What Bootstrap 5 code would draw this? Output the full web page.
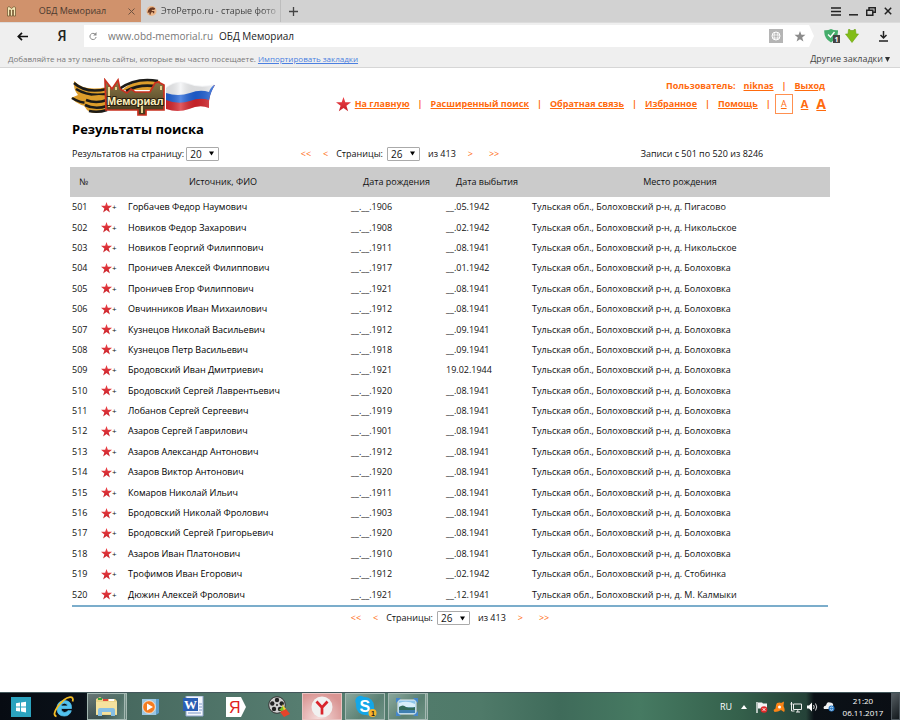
<!DOCTYPE html>
<html lang="ru">
<head>
<meta charset="utf-8">
<meta name="viewport" content="width=device-width, initial-scale=1">
<title>ОБД Мемориал</title>
<link rel="stylesheet" href="https://cdn.jsdelivr.net/npm/bootstrap@5.3.0/dist/css/bootstrap.min.css">
<style>
  body { font-family: "Open Sans", "Noto Sans", sans-serif; font-size: 9px; line-height: 12px; color: #111; background: #fff; }
  svg { display: block; flex: none; }
  button { border: 0; background: none; padding: 0; color: inherit; }
  .tabstrip { background: #d2d2d2; height: 23px; border-bottom: 1px solid #dcdcdc; color: #444; }
  .tab-on { background: #d0926c; width: 141px; padding: 0 6px; color: #4b3a30; }
  .tab-off { width: 140px; padding: 0 2px 0 5px; border-right: 1px solid #bdbdbd; }
  .fade-text { white-space: nowrap; -webkit-mask-image: linear-gradient(90deg, #000 88%, #0005); mask-image: linear-gradient(90deg, #000 88%, #0005); }
  .tools { background: #efefef; height: 26px; padding: 2px 12px 2px 0; color: #222; }
  .back-cell { width: 44px; }
  .ya-cell { width: 36px; font-size: 14px; line-height: 16px; font-family: "Roboto", sans-serif; font-weight: 500; }
  .address { background: #fff; height: 22px; padding: 0 8px 0 5px; gap: 11px; font-size: 10px; clip-path: polygon(0 0, calc(100% - 5px) 0, 100% 50%, calc(100% - 5px) 100%, 0 100%); }
  .address input { border: 0; outline: 0; background: none; padding: 0; width: 107px; color: #777; }
  .ext { padding-left: 10px; }
  .bookbar { background: #efefef; height: 19px; border-bottom: 1px solid #d6d6d6; padding: 2px 10px 0 8px; font-size: 8px; color: #777; }
  .bookbar a { color: #4b7fe0; margin-left: 2px; }
  .bookbar button { color: #444; font-size: 9px; gap: 2px; }
  .site { padding: 10px 70px 0; }
  .masthead { height: 42px; }
  .orange, .orange a { color: #ff6a0d; }
  .orange { font-weight: 700; }
  .user-line { gap: 8px; padding-right: 5px; margin-top: 2px; }
  .menu-line { gap: 8px; padding-right: 4px; height: 24px; }
  .letters { gap: 4px; }
  .size-on { border: 1px solid #ff9050; width: 18px; height: 20px; font-weight: 400; }
  .size-m { font-size: 11px; }
  .size-l { font-size: 14px; }
  .page-title { font-size: 13px; font-weight: 700; line-height: 18px; padding-left: 2px; color: #000; }
  .pager-row { height: 29px; display: grid; grid-template-columns: 156px 1fr 256px; padding-top: 2px; }
  .per-page { padding-left: 2px; gap: 2px; }
  .pick { appearance: none; -webkit-appearance: none; border: 1px solid #aaa; border-radius: 1px; height: 14px; width: 33px; padding: 0 0 0 3px; font-size: 10px; line-height: 12px; color: #111;
    background: #fff url("data:image/svg+xml,%3Csvg xmlns='http://www.w3.org/2000/svg' viewBox='0 0 6 5'%3E%3Cpath d='M0 0h6L3 5z'/%3E%3C/svg%3E") no-repeat right 4px center / 5px 5px; }
  .pages a { color: #ff6a0d; text-decoration: none; white-space: nowrap; }
  .pages a:first-child, .pages a:last-child { margin: 0 4px; }
  .results { table-layout: fixed; width: 100%; height: 438px; }
  .results th { background: #cbcbcb; height: 30px; font-weight: 400; text-align: center; padding: 0; }
  .results td { padding: 0 2px; white-space: nowrap; vertical-align: middle; }
  .results td:nth-child(2) { padding-left: 4px; }
  .results td:nth-child(3) a { color: #000; font-weight: 500; text-decoration: none; }
  .results button { font-size: 8px; line-height: 12px; }
  .c-num { width: 27px; } .c-star { width: 29px; } .c-name { width: 223px; } .c-born { width: 95px; } .c-out { width: 86px; }
  .rule { height: 2px; background: #7badcb; margin: 0 2px; }
  .taskbar { height: 28px; padding-left: 1px; border-top: 1px solid #43575b; color: #fff;
    background: linear-gradient(90deg, #070b12 0, #0a1119 84px, #47695f 124px, #567d70 300px, #4f7a69 480px, #3f6b5a 560px, #467a62 640px, #34604b 740px, #254238 806px, #0b1117 814px, #0a0e14 100%); }
  .tasks { gap: 3px; }
  .task { width: 40px; height: 27px; display: flex; align-items: center; justify-content: center; }
  .task-open { border: 1px solid #a4b8b2; background: linear-gradient(135deg, #b9ccc488, #6c8b8155 60%, #a0bbb055); }
  .task-stack { border-right: 3px double #a4b8b2; }
  .task-now { border: 1px solid #e9c4c2; background: radial-gradient(circle at 40% 100%, #f5dcdb, #d99593 80%); }
  .tray { gap: 5px; }
  .clock { font-size: 8px; line-height: 12px; width: 46px; }
  .peek { width: 9px; height: 27px; border: 1px solid #4d565c; background: linear-gradient(135deg, #555d62, #12181c); }
</style>
<script src="https://cdn.jsdelivr.net/npm/bootstrap@5.3.0/dist/js/bootstrap.bundle.min.js"></script>
</head>
<body class="d-flex flex-column min-vh-100">

<svg width="0" height="0" class="position-absolute" aria-hidden="true">
  <defs>
    <linearGradient id="red" x1="0" y1="0" x2="0" y2="1"><stop offset="0" stop-color="#ee444a"/><stop offset="1" stop-color="#c81f26"/></linearGradient>
    <linearGradient id="flag" x1="0" y1="0" x2="1" y2="0"><stop offset="0" stop-color="#000" stop-opacity=".1"/><stop offset=".3" stop-color="#fff" stop-opacity=".25"/><stop offset=".6" stop-color="#000" stop-opacity=".1"/><stop offset="1" stop-color="#fff" stop-opacity=".25"/></linearGradient>
    <linearGradient id="plate" x1="0" y1="0" x2="0" y2="1"><stop offset="0" stop-color="#8c7a48"/><stop offset="1" stop-color="#43361c"/></linearGradient>
    <symbol id="star" viewBox="0 0 20 20"><path d="M10 0l2.400 7H20l-6.100 4.600L16.200 19 10 14.600 3.800 19l2.300-7.400L0 7h7.600z" fill="url(#red)"/></symbol>
  </defs>
</svg>

<header>
  <div class="tabstrip d-flex">
    <div class="tab-on d-flex align-items-center">
      <svg width="11" height="12" viewBox="0 0 11 12"><path d="M1.500 11V2.500L3 1.500l2.500 2L8 1.500l1.500 1V11h-2V5h-1v6h-2V5h-1v6z" fill="#f6e9b8" stroke="#66502a" stroke-width=".7"/></svg>
      <span class="flex-fill text-center">ОБД Мемориал</span>
      <button type="button" aria-label="Закрыть вкладку"><svg width="7" height="7" viewBox="0 0 7 7"><path d="M.5.5l6 6M6.500.5l-6 6" stroke="#6d5241"/></svg></button>
    </div>
    <div class="tab-off d-flex align-items-center gap-1">
      <svg width="11" height="12" viewBox="0 0 12 12"><circle cx="6" cy="6" r="5.500" fill="#eeb98c"/><path d="M1.500 8l1-3 2-2.500 3-.5 2.500 1-1 2-2-.5-1 1.500h3v2.500H7.500V7l-2 .5-.5 2.500-1.500-.5.500-2z" fill="#6b3a22"/></svg>
      <span class="fade-text">ЭтоРетро.ru - старые фото</span>
    </div>
    <button type="button" class="px-2 d-flex align-items-center" aria-label="Новая вкладка"><svg width="9" height="9" viewBox="0 0 9 9"><path d="M4.500 0v9M0 4.500h9" stroke="#444" stroke-width="1.300"/></svg></button>
    <div class="ms-auto d-flex align-items-center gap-2 pe-2">
      <button type="button" aria-label="Меню"><svg width="10" height="9" viewBox="0 0 10 9"><path d="M0 1h10M0 4.500h10M0 8h10" stroke="#222" stroke-width="1.500"/></svg></button>
      <button type="button" aria-label="Свернуть"><svg width="9" height="9" viewBox="0 0 9 9"><path d="M0 7.800h9" stroke="#222" stroke-width="1.500"/></svg></button>
      <button type="button" aria-label="Окно"><svg width="10" height="9" viewBox="0 0 10 9"><path d="M3 3V.8h6.300v4.500H7M.7 3.300h6.100v4.900H.7z" fill="none" stroke="#222" stroke-width="1.500"/></svg></button>
      <button type="button" aria-label="Закрыть"><svg width="8" height="8" viewBox="0 0 8 8"><path d="M.8.800l6.400 6.400M7.200.800L.8 7.200" stroke="#222" stroke-width="1.500"/></svg></button>
    </div>
  </div>
  <div class="tools d-flex align-items-center">
    <button type="button" class="back-cell d-flex justify-content-center" aria-label="Назад"><svg width="11" height="9" viewBox="0 0 11 9"><path d="M11 4.500H1.500M5 .8L1.300 4.500 5 8.200" fill="none" stroke="#111" stroke-width="1.700"/></svg></button>
    <button type="button" class="ya-cell">Я</button>
    <div class="address d-flex align-items-center flex-fill ms-1">
      <svg width="8" height="9" viewBox="0 0 8 9"><path d="M6.300 2.300A3.100 3.100 0 1 0 7.100 5" fill="none" stroke="#888"/><path d="M7.500 0v3.400H4.200z" fill="#888"/></svg>
      <div class="d-flex align-items-center flex-fill"><input type="text" class="me-1" value="www.obd-memorial.ru" aria-label="Адрес"><span>ОБД Мемориал</span></div>
      <svg width="14" height="14" viewBox="0 0 14 14"><path d="M0 0h14v14H0z" fill="#b5b5b5"/><circle cx="7" cy="7" r="4" fill="none" stroke="#fff"/><path d="M3 6h8M3.500 9h7M6 3q-2 4 0 8M8 3q2 4 0 8" fill="none" stroke="#fff" stroke-width=".7"/></svg>
      <svg width="12" height="11" viewBox="0 0 20 20"><path d="M10 0l2.600 7H20l-6 4.800L16.200 19 10 14.800 3.800 19 6 11.800 0 7h7.400z" fill="#8c8c8c"/></svg>
    </div>
    <div class="ext d-flex align-items-center gap-1">
      <svg width="17" height="16" viewBox="0 0 17 16"><path d="M7 1q3 1.500 7 1.200Q14.500 10 7 14.500-.5 10 .3 2.200 4 2.500 7 1z" fill="#45ad6b"/><path d="M4 6.500l2.500 2.500L10.500 4" fill="none" stroke="#fff" stroke-width="1.300"/><path d="M9 7h7v8H9z" fill="#444"/><text x="10.500" y="14" font-size="7" font-weight="700" fill="#fff">1</text></svg>
      <svg width="14" height="14" viewBox="0 0 14 14"><path d="M3.500.5h1.500v1h4V.5h1.500L11 5h2.500L7 13.500.5 5H3z" fill="#82bd18" stroke="#6aa30d" stroke-width=".6"/></svg>
      <svg class="ms-3" width="9" height="11" viewBox="0 0 9 11"><path d="M4.500 0v6.500M1.500 4l3 3 3-3M0 10h9" fill="none" stroke="#222" stroke-width="1.500"/></svg>
    </div>
  </div>
  <div class="bookbar d-flex align-items-center">
    <span>Добавляйте на эту панель сайты, которые вы часто посещаете.</span>
    <a href="#">Импортировать закладки</a>
    <button type="button" class="ms-auto d-flex align-items-center">Другие закладки <svg width="5" height="5" viewBox="0 0 6 6"><path d="M0 0h6L3 6z" fill="#333"/></svg></button>
  </div>
</header>

<main class="site">
  <div class="masthead d-flex justify-content-between">
    <svg width="146" height="41" viewBox="0 0 146 41" role="img" aria-label="Мемориал">
      <path d="M96 10q10-8 22-4 12 5 27 1-7 9-6 23-9-4-20 1-11 4-23 0z" fill="#d9252c"/>
      <path d="M96 10q10-8 22-4 12 5 27 1-4 6-6 15-9-3-19 1-12 4-24-1z" fill="#1f62d9"/>
      <path d="M96 9q10-8 22-4 12 5 27 1-5 4-6 8-9-3-19 1-12 4-24 0z" fill="#f3f4f6"/>
      <path d="M96 10q10-8 22-4 12 5 27 1-7 9-6 23-9-4-20 1-11 4-23 0z" fill="url(#flag)"/>
      <path d="M4 3q10 11 33 6v17q-22 8-36-6l7-3Q3 11 4 3z" fill="#dd9d2a"/>
      <path d="M4 5q12 11 33 6M6 11q13 8 31 5M2 20q14 9 35 2" fill="none" stroke="#1c1b18" stroke-width="2.600"/>
      <path d="M16 20q10-5 21-2v14q-13 6-20 0-5-5-1-12z" fill="#dd9d2a"/>
      <path d="M16 22q10 4 21 0M15 27q10 5 22 1M19 33q9 2 18-1" fill="none" stroke="#1c1b18" stroke-width="2.600"/>
      <path d="M50 14Q66-2 90 3v9H50z" fill="#dd9d2a"/>
      <path d="M49 11Q66-1 88 3M56 13q16-8 32-4" fill="none" stroke="#1c1b18" stroke-width="2.600"/>
      <path d="M35 2l7 9 6-9 2 9 7 4 4-4 4 3h15l5-9 3-1 6 3v25H76v5h-8v-5H36z" fill="url(#plate)" stroke="#c9301f" stroke-width="1.700"/>
      <path d="M39 9v20M46 9v3M91 8v4M72 27v8" stroke="#e6d28f" stroke-width="2"/>
      <text x="37" y="27" font-family="Liberation Sans" font-weight="700" font-size="11" fill="#fdf1c0" stroke="#2b2110" stroke-width="2" paint-order="stroke">Мемориал</text>
    </svg>
    <nav class="orange">
      <div class="user-line d-flex justify-content-end"><span>Пользователь:</span><a href="#">niknas</a><span>|</span><a href="#">Выход</a></div>
      <div class="menu-line d-flex align-items-center">
        <div class="d-flex align-items-center gap-1"><svg width="15" height="15"><use href="#star"/></svg><a href="#">На главную</a></div>
        <span>|</span><a href="#">Расширенный поиск</a><span>|</span><a href="#">Обратная связь</a><span>|</span><a href="#">Избранное</a><span>|</span><a href="#">Помощь</a>
        <div class="letters d-flex align-items-center"><span>|</span><a href="#" class="size-on d-flex align-items-center justify-content-center">A</a><a href="#" class="size-m mx-1">A</a><a href="#" class="size-l">A</a></div>
      </div>
    </nav>
  </div>
  <h1 class="page-title m-0">Результаты поиска</h1>
  <div class="pager-row align-items-center">
    <div class="per-page d-flex align-items-center"><label for="per">Результатов на страницу:</label><select id="per" class="pick"><option>20</option></select></div>
    <nav class="pages d-flex align-items-center justify-content-center gap-1"><a href="#">&lt;&lt;</a><a href="#" class="mx-1">&lt;</a><label for="p1">Страницы:</label><select id="p1" class="pick"><option>26</option></select><span class="ms-1">из 413</span><a href="#" class="mx-2">&gt;</a><a href="#">&gt;&gt;</a></nav>
    <div class="text-center">Записи с 501 по 520 из 8246</div>
  </div>
  <table class="results">
    <colgroup><col class="c-num"><col class="c-star"><col class="c-name"><col class="c-born"><col class="c-out"><col></colgroup>
    <thead><tr><th scope="col">№</th><th scope="col" colspan="2">Источник, ФИО</th><th scope="col">Дата рождения</th><th scope="col">Дата выбытия</th><th scope="col">Место рождения</th></tr></thead>
    <tbody id="rows"></tbody>
  </table>
  <div class="rule"></div>
  <nav class="pages d-flex align-items-center justify-content-center gap-1 pt-1"><a href="#">&lt;&lt;</a><a href="#" class="mx-1">&lt;</a><label for="p2">Страницы:</label><select id="p2" class="pick"><option>26</option></select><span class="ms-1">из 413</span><a href="#" class="mx-2">&gt;</a><a href="#">&gt;&gt;</a></nav>
</main>

<footer class="taskbar d-flex align-items-center mt-auto">
  <div class="tasks d-flex">
    <button type="button" class="task" aria-label="Пуск"><svg width="20" height="20" viewBox="0 0 20 20"><path d="M0 0h20v20H0z" fill="#2ba3bf"/><path d="M5 6.200l4-.6v4H5zM10 5.500l5-.8v4.900h-5zM5 10.500h4v4l-4-.6zM10 10.500h5v4.900l-5-.8z" fill="#fff"/></svg></button>
    <button type="button" class="task" aria-label="Internet Explorer"><svg width="22" height="22" viewBox="0 0 22 22"><path d="M18.500 12.500H8q.3 4 3.600 4 2.400 0 3.200-1.800h3.500Q16.500 20 11.300 20 4 20 4 12.500 4 5 11.300 4.600q7.500 0 7.200 7.900zM8 10h6.700q-.4-2.800-3.300-2.800T8 10z" fill="#52c3ef" stroke="#52c3ef" stroke-width=".8"/><path d="M3.500 20.500Q-1 19 4.500 11 11 2 17 1.200q4-.2 2.600 4.300" fill="none" stroke="#f3bd25" stroke-width="1.800"/></svg></button>
    <button type="button" class="task task-open task-stack" aria-label="Проводник"><svg width="23" height="21" viewBox="0 0 23 21"><path d="M1 3l4-2 3 2h12l2 2v14H1z" fill="#edd58a"/><path d="M3 2h4v2H3z" fill="#3aa03c"/><path d="M8 3h5v2H8z" fill="#dd4939"/><path d="M14 3h5v2h-5z" fill="#fff"/><path d="M1 6h21v12H1z" fill="#f5e29e"/><path d="M3 20v-6q0-2 2-2h13q2 0 2 2v6h-4v-4H7v4z" fill="#86bfe4"/></svg></button>
    <button type="button" class="task" aria-label="Проигрыватель"><svg width="19" height="18" viewBox="0 0 19 18"><path d="M5 1h13v14l-3 2H5z" fill="#5f9fcb"/><path d="M1 1h14v16H1z" fill="#9cc7e2"/><circle cx="8" cy="9" r="6.300" fill="#f47c20" stroke="#fff" stroke-width=".7"/><path d="M6 5.500v7l6-3.500z" fill="#fff"/></svg></button>
    <button type="button" class="task" aria-label="Word"><svg width="21" height="21" viewBox="0 0 21 21"><path d="M3 0h17v20H3z" fill="#f3f6fc" stroke="#8fa6cd"/><path d="M0 2h15v13H0z" fill="#2b5fb5"/><text x="1" y="13" font-family="Liberation Serif" font-size="13" font-weight="700" fill="#fff">W</text><path d="M5 17h13M16 8h3M16 11h3M16 14h3" stroke="#7e98c8"/></svg></button>
    <button type="button" class="task" aria-label="Яндекс"><svg width="20" height="20" viewBox="0 0 20 20"><path d="M0 0h15l5 10-5 10H0z" fill="#fff"/><text x="3" y="16" font-family="Liberation Sans" font-size="16" fill="#e02020">Я</text></svg></button>
    <button type="button" class="task" aria-label="Видео"><svg width="22" height="21" viewBox="0 0 22 21"><circle cx="9" cy="9" r="8.300" fill="#cfcfcf" stroke="#333"/><g fill="#222"><circle cx="9" cy="4" r="2.200"/><circle cx="4.300" cy="7.500" r="2.200"/><circle cx="6" cy="13" r="2.200"/><circle cx="12" cy="13" r="2.200"/><circle cx="13.700" cy="7.500" r="2.200"/><circle cx="9" cy="9" r="1"/></g><path d="M11 14l4-4 2 6z" fill="#78c22a"/><path d="M14 8l4 5-2 2z" fill="#f4d335"/><path d="M12 16l6-3 4 5-6 3z" fill="#e6442b"/></svg></button>
    <button type="button" class="task task-now" aria-label="Яндекс.Браузер"><svg width="22" height="22" viewBox="0 0 22 22"><circle cx="11" cy="11" r="10.500" fill="#f1f1f1"/><path d="M5.500 5.500l5.500 6 5.500-6M11 11v7.500" fill="none" stroke="#d9252c" stroke-width="2.700"/></svg></button>
    <button type="button" class="task task-open" aria-label="Skype"><svg width="23" height="23" viewBox="0 0 23 23"><circle cx="11" cy="11" r="9" fill="#14a7e8"/><circle cx="6.500" cy="6" r="5.200" fill="#14a7e8"/><circle cx="15" cy="15" r="5.500" fill="#14a7e8"/><text x="5.500" y="16.500" font-family="Liberation Sans" font-size="16" font-weight="700" fill="#fff">S</text><circle cx="18.500" cy="18" r="4" fill="#f7b52a"/><text x="17" y="21" font-family="Liberation Sans" font-size="7" font-weight="700" fill="#222">1</text></svg></button>
    <button type="button" class="task task-open task-stack" aria-label="Изображения"><svg width="22" height="18" viewBox="0 0 22 18"><path d="M2 2h18v14H2z" fill="#8ec5ea" stroke="#e8eef2"/><path d="M3 5q8-3 16 1v3H3z" fill="#d9eefa"/><path d="M3 9q4-3 7 0 5 1 9 0v3H3z" fill="#356b5a"/><path d="M3 12h16v3H3z" fill="#3f7fb0"/><path d="M0 0h5L0 5zM22 0v5l-5-5zM0 18v-5l5 5zM22 18h-5l5-5z" fill="#4486cc"/></svg></button>
  </div>
  <div class="tray d-flex align-items-center ms-auto">
    <span>RU</span>
    <svg class="mx-1" width="6" height="4" viewBox="0 0 6 4"><path d="M0 4l3-4 3 4z" fill="#fff"/></svg>
    <svg width="12" height="12" viewBox="0 0 12 12"><path d="M1 1v11" stroke="#fff" stroke-width="1.300"/><path d="M2 1.500h4l1 1h4v5H2z" fill="#f3f3f3"/><circle cx="8" cy="8.500" r="3.300" fill="#e02a2a"/><path d="M6.700 7.200l2.600 2.600M9.300 7.200L6.700 9.800" stroke="#fff"/></svg>
    <svg width="12" height="12" viewBox="0 0 12 12"><path d="M4 2q3-1 4 0l3-1.500L10.500 5q2 4 .5 6l-3-2-3 1.500-3.500.5-1-2 2-1.500Q2.500 4 4 2z" fill="#fb8416"/><circle cx="6.500" cy="6" r="1.500" fill="#fff"/></svg>
    <svg width="12" height="12" viewBox="0 0 12 12"><path d="M3.500 3h8v5.500h-8zM6 11h4M7.800 8.500V11M1.500 1v4M.3 3h2.400M1.500 5v5h3" fill="none" stroke="#eee"/></svg>
    <svg width="11" height="10" viewBox="0 0 11 10"><path d="M0 3.500h2L5 .5v9l-3-3H0z" fill="#fff"/><path d="M6.500 3q1.500 2 0 4M8.500 1.500q2.500 3.500 0 7" fill="none" stroke="#ddd"/></svg>
    <svg width="12" height="11" viewBox="0 0 12 11"><path d="M1 8Q-.5 5 3 4.500 4 0 7 1.500 11 2 10 5v3z" fill="#f1f1f1"/><circle cx="8.500" cy="7.500" r="3" fill="#2d7dc8"/><path d="M7 7q1.500-2 3 0M7 8.500q1.500 1.500 3 0" fill="none" stroke="#fff" stroke-width=".7"/></svg>
    <div class="clock text-center">21:20<br>06.11.2017</div>
    <button type="button" class="peek" aria-label="Свернуть все окна"></button>
  </div>
</footer>

<script>
  const bol = "Болоховка", nik = "Никольское";
  const people = [
    ["Горбачев Федор Наумович", "1906", "__.05.1942", "Пигасово"],
    ["Новиков Федор Захарович", "1908", "__.02.1942", nik],
    ["Новиков Георгий Филиппович", "1911", "__.08.1941", nik],
    ["Проничев Алексей Филиппович", "1917", "__.01.1942", bol],
    ["Проничев Егор Филиппович", "1921", "__.08.1941", bol],
    ["Овчинников Иван Михаилович", "1912", "__.08.1941", bol],
    ["Кузнецов Николай Васильевич", "1912", "__.09.1941", bol],
    ["Кузнецов Петр Васильевич", "1918", "__.09.1941", bol],
    ["Бродовский Иван Дмитриевич", "1921", "19.02.1944", bol],
    ["Бродовский Сергей Лаврентьевич", "1920", "__.08.1941", bol],
    ["Лобанов Сергей Сергеевич", "1919", "__.08.1941", bol],
    ["Азаров Сергей Гаврилович", "1901", "__.08.1941", bol],
    ["Азаров Александр Антонович", "1912", "__.08.1941", bol],
    ["Азаров Виктор Антонович", "1920", "__.08.1941", bol],
    ["Комаров Николай Ильич", "1911", "__.08.1941", bol],
    ["Бродовский Николай Фролович", "1903", "__.08.1941", bol],
    ["Бродовский Сергей Григорьевич", "1920", "__.08.1941", bol],
    ["Азаров Иван Платонович", "1910", "__.08.1941", bol],
    ["Трофимов Иван Егорович", "1912", "__.02.1942", "Стобинка"],
    ["Дюжин Алексей Фролович", "1921", "__.12.1941", "М. Калмыки"]
  ];
  document.getElementById("rows").innerHTML = people.map(([name, born, out, place], i) => `
    <tr><td>${501 + i}</td>
    <td><button type="button" class="d-flex align-items-center" aria-label="В избранное"><svg width="11" height="11"><use href="#star"/></svg>+</button></td>
    <td><a href="#">${name}</a></td><td>__.__.${born}</td><td>${out}</td>
    <td>Тульская обл., Болоховский р-н, д. ${place}</td></tr>`).join("");
</script>
</body>
</html>
